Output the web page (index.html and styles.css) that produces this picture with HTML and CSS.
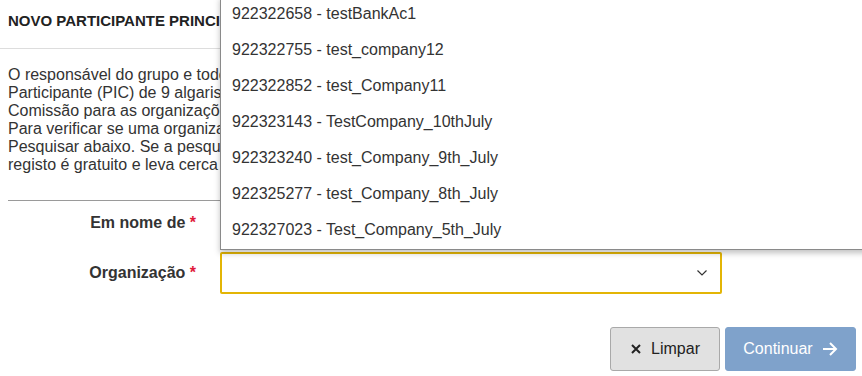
FILE: index.html
```html
<!DOCTYPE html>
<html lang="pt">
  <head>
    <meta charset="UTF-8" />
    <meta name="viewport" content="width=device-width, initial-scale=1.0" />
    <title>Novo participante principal</title>
    <link rel="stylesheet" href="styles.css">
  </head>
  <body>
    <div class="page-header">
      <h1>NOVO PARTICIPANTE PRINCIPAL</h1>
    </div>
    <div class="container">
      <p class="intro">
        O responsável do grupo e todos os participantes devem ter um Código de Identificação do<br>
        Participante (PIC) de 9 algarismos. Os PIC são emitidos pelo serviço central de validação da<br>
        Comissão para as organizações que se registaram no Portal do Participante.<br>
        Para verificar se uma organização já tem um PIC, introduza o nome e clique em<br>
        Pesquisar abaixo. Se a pesquisa não der resultados, a organização terá de se registar. O<br>
        registo é gratuito e leva cerca de 10 minutos.
      </p>
      <form id="participant-form" class="participant-form">
        <div class="form-row">
          <label for="on-behalf">Em nome de <span class="required">*</span></label>
          <div class="field">
            <div class="select-box" id="on-behalf">
              <svg class="chevron" width="10" height="6" viewBox="0 0 10 6"><polyline points="0.5,0.5 5,5 9.5,0.5" fill="none" stroke="#333" stroke-width="1.2"/></svg>
            </div>
            <ul class="listbox">
              <li>922322658 - testBankAc1</li>
              <li>922322755 - test_company12</li>
              <li>922322852 - test_Company11</li>
              <li>922323143 - TestCompany_10thJuly</li>
              <li>922323240 - test_Company_9th_July</li>
              <li>922325277 - test_Company_8th_July</li>
              <li>922327023 - Test_Company_5th_July</li>
            </ul>
          </div>
        </div>
        <div class="form-row">
          <label for="organization">Organização <span class="required">*</span></label>
          <div class="field">
            <div class="select-box focused" id="organization">
              <svg class="chevron" width="10" height="6" viewBox="0 0 10 6"><polyline points="0.5,0.5 5,5 9.5,0.5" fill="none" stroke="#333" stroke-width="1.2"/></svg>
            </div>
          </div>
        </div>
        <div class="form-actions">
          <button type="reset" class="btn btn-clear">
            <svg width="12" height="12" viewBox="0 0 12 12"><path d="M2 2 L10 10 M10 2 L2 10" stroke="#222" stroke-width="2"/></svg>
            Limpar
          </button>
          <button type="submit" class="btn btn-continue" disabled>
            Continuar
            <svg width="16" height="14" viewBox="0 0 16 14"><path d="M1 7 H14 M8 1 L14 7 L8 13" fill="none" stroke="#fff" stroke-width="2"/></svg>
          </button>
        </div>
      </form>
    </div>
  </body>
</html>
```

FILE: styles.css
```css
html,
body {
  margin: 0;
  overflow: hidden;
}

body {
  font-family: "Liberation Sans", Arial, sans-serif;
  color: #333;
  background-color: #fff;
}

.page-header {
  height: 49px;
  box-sizing: border-box;
  padding: 12px 8px 0;
  border-bottom: 1px solid #ddd;
}

.page-header h1 {
  margin: 0;
  font-size: 15px;
  line-height: 17px;
  font-weight: bold;
  color: #222;
  white-space: nowrap;
}

.container {
  padding: 0 6px 0 8px;
}

.intro {
  margin: 17px 0 0;
  font-size: 16px;
  line-height: 18px;
  white-space: nowrap;
  padding-bottom: 26px;
  border-bottom: 1px solid #9a9a9a;
}

.form-row {
  display: grid;
  grid-template-columns: 212px 502px;
  align-items: center;
  margin-top: 8px;
}

.form-row:first-child {
  margin-top: 1px;
}

.form-row label {
  text-align: right;
  padding-right: 24px;
  font-size: 16px;
  font-weight: bold;
  color: #333;
}

.required {
  color: #e0193a;
}

.field {
  position: relative;
}

.select-box {
  height: 42px;
  box-sizing: border-box;
  border: 1px solid #bbb;
  border-radius: 2px;
  display: flex;
  align-items: center;
  justify-content: flex-end;
  padding-right: 14px;
}

.select-box.focused {
  border: 2px solid #e3b505;
  padding-right: 13px;
}

.listbox {
  position: absolute;
  left: 0;
  bottom: -6px;
  width: 700px;
  margin: 0;
  padding: 0 0 1px;
  list-style: none;
  background-color: #fff;
  border: 1px solid #8a8a8a;
  border-top: none;
  box-shadow: 0 3px 6px rgba(0, 0, 0, 0.25);
  z-index: 2;
}

.listbox li {
  padding: 9px 11px;
  font-size: 16px;
  line-height: 18px;
  color: #333;
  white-space: nowrap;
}

.form-actions {
  display: flex;
  justify-content: flex-end;
  gap: 5px;
  margin-top: 33px;
}

.btn {
  height: 44px;
  display: flex;
  align-items: center;
  gap: 9px;
  font-family: "Liberation Sans", Arial, sans-serif;
  font-size: 16px;
  border-radius: 3px;
  cursor: pointer;
}

.btn-clear {
  width: 110px;
  justify-content: center;
  background-color: #e1e1e1;
  border: 1px solid #a9a9a9;
  color: #222;
}

.btn-continue {
  width: 131px;
  justify-content: center;
  background-color: #7fa2cb;
  border: 1px solid #7fa2cb;
  color: #fff;
}
```
